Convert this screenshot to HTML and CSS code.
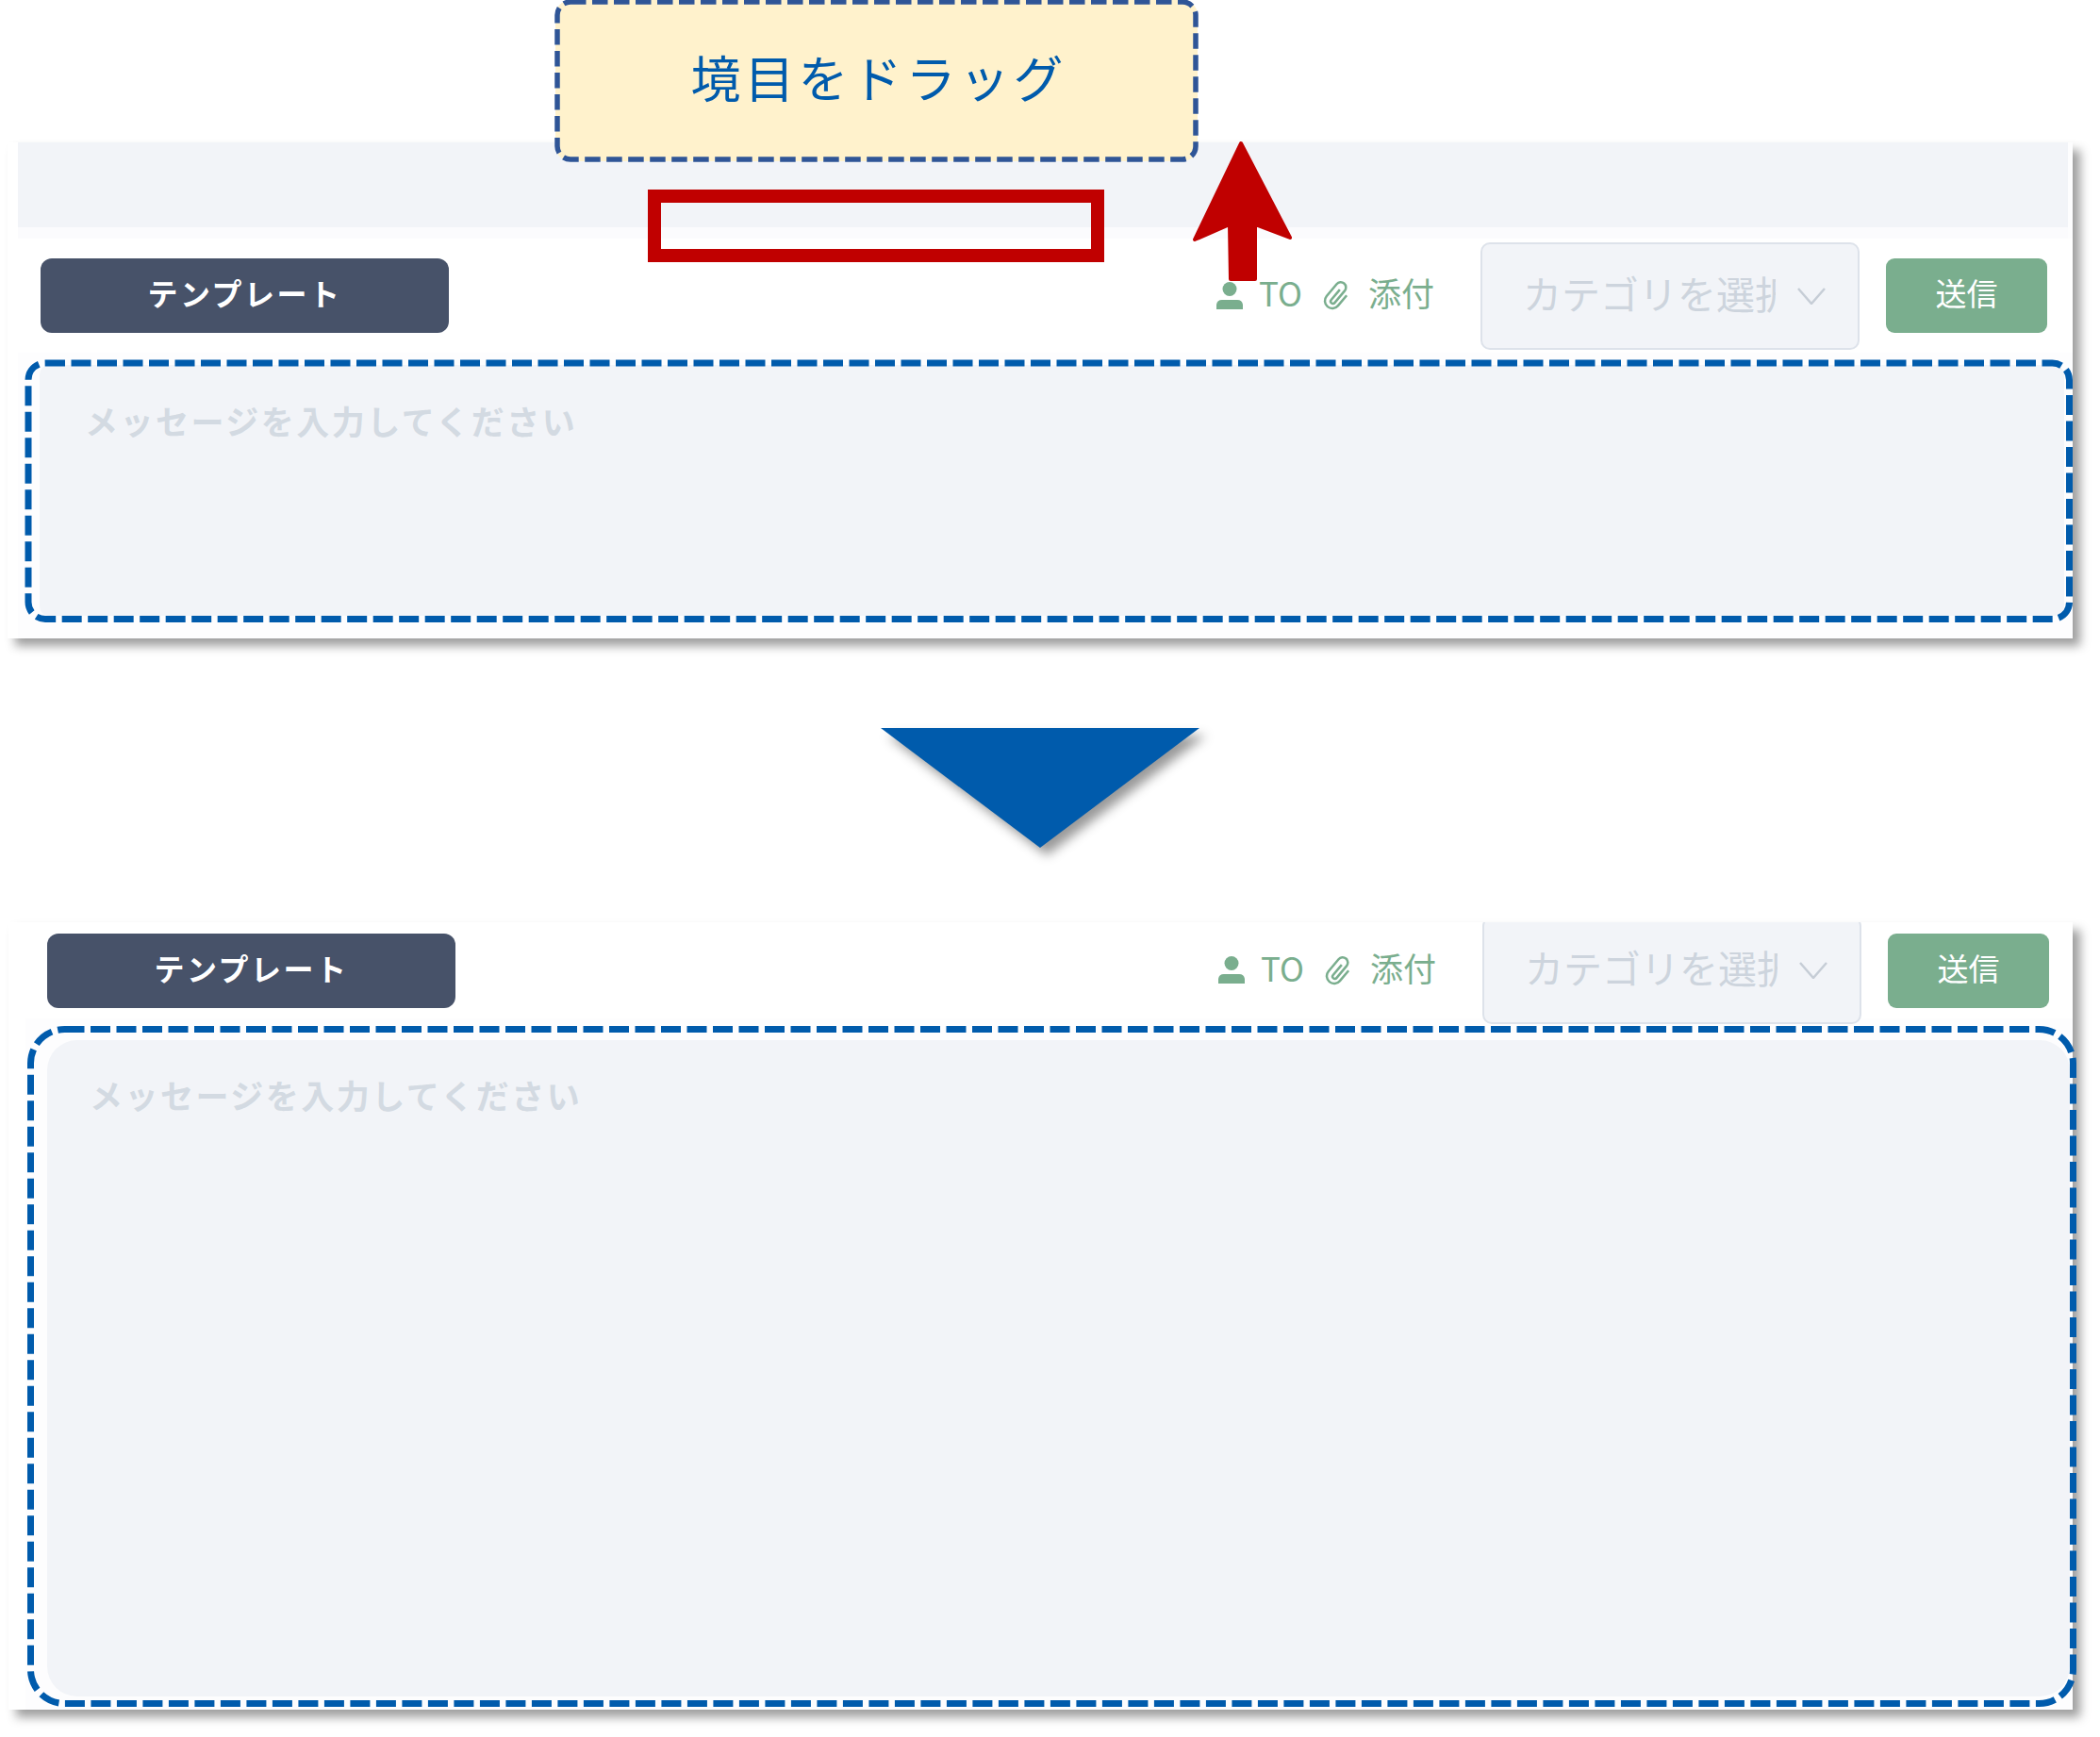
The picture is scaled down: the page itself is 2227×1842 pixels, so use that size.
FILE: index.html
```html
<!DOCTYPE html>
<html lang="ja">
<head>
    <meta charset="UTF-8">
    <title>境目をドラッグ</title>
    <link rel="stylesheet" href="styles.css">
</head>
<body>
    <div class="page">
        <div class="callout">境目をドラッグ</div>

        <div class="panel panel-before">
            <div class="drag-band"></div>
            <div class="toolbar">
                <button class="btn-template">テンプレート</button>
                <div class="tools">
                    <svg class="icon" viewBox="0 0 28 29"><circle cx="14" cy="7.5" r="7.5"/><path d="M0 29v-5a6 6 0 0 1 6-5h16a6 6 0 0 1 6 5v5z"/></svg>
                    <span class="tool-label">TO</span>
                    <svg class="icon icon-clip" viewBox="0 0 24 24"><path transform="rotate(40 12 12)" d="M11 8v9a1.500 1.500 0 0 0 3 0V6.500a3.500 3.500 0 0 0-7 0V17a5 5 0 0 0 10 0V8"/></svg>
                    <span class="tool-label">添付</span>
                </div>
                <div class="select">
                    <span class="select-text">カテゴリを選択</span>
                    <svg class="chevron" viewBox="0 0 30 18"><path d="M1 1l14 16L29 1"/></svg>
                </div>
                <button class="btn-send">送信</button>
            </div>
            <div class="message">メッセージを入力してください</div>
        </div>

        <svg class="down-arrow" viewBox="0 0 338 127"><path d="M0 0h338L169 127z"/></svg>

        <div class="panel panel-after">
            <div class="toolbar">
                <button class="btn-template">テンプレート</button>
                <div class="tools">
                    <svg class="icon" viewBox="0 0 28 29"><circle cx="14" cy="7.5" r="7.5"/><path d="M0 29v-5a6 6 0 0 1 6-5h16a6 6 0 0 1 6 5v5z"/></svg>
                    <span class="tool-label">TO</span>
                    <svg class="icon icon-clip" viewBox="0 0 24 24"><path transform="rotate(40 12 12)" d="M11 8v9a1.500 1.500 0 0 0 3 0V6.500a3.500 3.500 0 0 0-7 0V17a5 5 0 0 0 10 0V8"/></svg>
                    <span class="tool-label">添付</span>
                </div>
                <div class="select">
                    <span class="select-text">カテゴリを選択</span>
                    <svg class="chevron" viewBox="0 0 30 18"><path d="M1 1l14 16L29 1"/></svg>
                </div>
                <button class="btn-send">送信</button>
            </div>
            <div class="message">メッセージを入力してください</div>
        </div>

        <!-- annotations drawn over the screenshots -->
        <svg class="overlay" viewBox="0 0 2227 1842">
            <rect class="mark-callout" x="591" y="2" width="677" height="167" rx="14"/>
            <rect class="mark-red" x="694" y="208" width="470" height="63"/>
            <path class="mark-arrow" d="M1316 152L1368 252L1331 238V296H1305L1304 238L1267 254Z"/>
            <rect class="mark-area" x="30" y="385" width="2164.500" height="271.500" rx="18"/>
            <rect class="mark-area" x="32.500" y="1091.500" width="2166" height="715" rx="36"/>
        </svg>
    </div>
</body>
</html>
```

FILE: styles.css
```css
body {
    margin: 0;
    background-color: #ffffff;
    font-family: "Noto Sans CJK JP", "Noto Sans", sans-serif;
}
.page {
    position: relative;
    width: 2227px;
    height: 1842px;
    padding-top: 151px;
    box-sizing: border-box;
    overflow: hidden;
}
.callout {
    position: absolute;
    left: 589px;
    top: 0;
    box-sizing: border-box;
    width: 681px;
    height: 171px;
    padding: 0 0 10px 5px;
    display: flex;
    align-items: center;
    justify-content: center;
    border-radius: 16px;
    background-color: #fff2cc;
    color: #005bac;
    font-size: 53px;
    font-weight: 400;
    letter-spacing: 4px;
    z-index: 1;
}
.panel {
    box-sizing: border-box;
    background-color: #fdfdfe;
    box-shadow: 8px 8px 10px rgba(0, 0, 0, 0.38);
}
.panel-before {
    width: 2190px;
    height: 526px;
    margin-left: 8px;
    border-left: 11px solid #ffffff;
}
.panel-after {
    width: 2189px;
    height: 835px;
    margin-left: 9px;
    margin-top: 79px;
    border-left: 18px solid #ffffff;
    overflow: hidden;
}
.drag-band {
    height: 90px;
    margin-right: 5px;
    background-color: #f2f4f8;
    border-bottom: 12px solid #fbfbfd;
}
.toolbar {
    display: flex;
    align-items: center;
    background-color: #ffffff;
    padding-right: 27px;
}
.panel-before .toolbar {
    height: 121px;
    padding-left: 24px;
}
.panel-after .toolbar {
    height: 102px;
    padding-left: 23px;
    padding-right: 25px;
}
.btn-template,
.btn-send {
    height: 79px;
    padding: 0 0 7px;
    border: none;
    color: #ffffff;
    font-family: inherit;
}
.btn-template {
    width: 433px;
    border-radius: 12px;
    background-color: #475269;
    font-size: 32px;
    font-weight: 700;
    letter-spacing: 2.500px;
}
.btn-send {
    width: 171px;
    margin-left: 28px;
    border-radius: 9px;
    background-color: #7aae8e;
    font-size: 33px;
}
.tools {
    display: flex;
    align-items: center;
    margin-left: auto;
    color: #7aae8e;
}
.icon {
    width: 28px;
    height: 29px;
    margin-bottom: 1px;
    fill: #7aae8e;
}
.icon-clip {
    width: 38px;
    height: 38px;
    fill: none;
    stroke: #7aae8e;
    stroke-width: 1.600;
}
.tool-label {
    margin-left: 17px;
    margin-bottom: 8px;
    font-size: 35px;
    font-weight: 400;
}
.tool-label + .icon-clip {
    margin-left: 18px;
}
.icon-clip + .tool-label {
    margin-left: 14px;
}
.select {
    display: flex;
    align-items: center;
    flex-shrink: 0;
    box-sizing: border-box;
    width: 402px;
    height: 114px;
    margin-left: 49px;
    padding-left: 43px;
    border: 2px solid #dde2ea;
    border-radius: 10px;
    background-color: #f2f4f8;
}
.select-text {
    width: 268px;
    margin-bottom: 8px;
    overflow: hidden;
    white-space: nowrap;
    color: #cdd4dd;
    font-size: 41px;
    font-weight: 400;
}
.chevron {
    width: 30px;
    height: 18px;
    margin-left: 23px;
    fill: none;
    stroke: #c6cdd6;
    stroke-width: 2.500;
}
.message {
    box-sizing: border-box;
    background-color: #f2f4f8;
    color: #d3dae2;
    font-size: 35px;
    font-weight: 700;
    letter-spacing: 2.500px;
    line-height: 50px;
}
.panel-before .message {
    height: 266px;
    margin: 13px 9px 0 23px;
    padding: 34px 0 0 48px;
    border-radius: 10px;
}
.panel-after .message {
    height: 696px;
    margin: 23px 3px 0 23px;
    padding: 33px 0 0 45px;
    border-radius: 32px;
}
.down-arrow {
    display: block;
    width: 338px;
    height: 127px;
    margin: 95px 0 0 934px;
    fill: #005bac;
    filter: drop-shadow(7px 8px 6px rgba(0, 0, 0, 0.4));
}
.overlay {
    position: absolute;
    left: 0;
    top: 0;
    width: 2227px;
    height: 1842px;
    z-index: 2;
    fill: none;
}
.mark-callout {
    stroke: #2f5597;
    stroke-width: 5.500;
    stroke-dasharray: 16.500 6.500;
}
.mark-red {
    stroke: #c00000;
    stroke-width: 14;
}
.mark-arrow {
    fill: #c00000;
    stroke: #c00000;
    stroke-width: 4;
    stroke-linejoin: round;
}
.mark-area {
    stroke: #005bac;
    stroke-width: 7;
    stroke-dasharray: 21 6.500;
}
```
